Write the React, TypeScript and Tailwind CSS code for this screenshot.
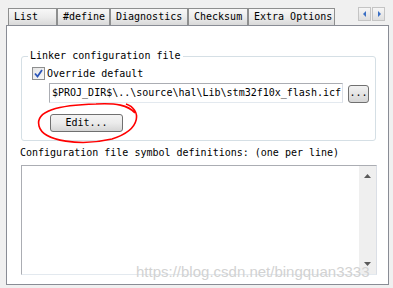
import React from 'react'

const mono = { fontFamily: '"DejaVu Sans Mono", "Liberation Mono", monospace' }

const tabs = [
  { label: 'List', w: 'w-[49px]' },
  { label: '#define', w: 'w-[53px]' },
  { label: 'Diagnostics', w: 'w-[78px]' },
  { label: 'Checksum', w: 'w-[60px]' },
  { label: 'Extra Options', w: 'w-[87px]' },
]

function Arrow({ dir }: { dir: 'left' | 'right' }) {
  return (
    <div className="w-[13px] h-[14px] border border-[#c4c4c4] bg-gradient-to-b from-[#f6f6f6] to-[#dedede] flex items-center justify-center">
      <svg width="4" height="6" viewBox="0 0 4 6">
        {dir === 'left' ? (
          <polygon points="3,0 3,6 0,3" fill="#3a6fc4" />
        ) : (
          <polygon points="1,0 1,6 4,3" fill="#3a6fc4" />
        )}
      </svg>
    </div>
  )
}

export default function App() {
  return (
    <div className="relative w-[393px] h-[288px] bg-[#f0f0f0] overflow-hidden text-[10px] text-black" style={mono}>
      {/* tab strip */}
      <div className="flex items-start h-[25px] pt-[8px] pl-[8px] pr-[8px]">
        {tabs.map((t) => (
          <div
            key={t.label}
            className={`${t.w} h-[17px] border border-b-0 border-[#8e8f8f] bg-gradient-to-b from-[#f8f8f8] via-[#ececec] to-[#d9d9d9] px-[5px] leading-[16px] whitespace-nowrap`}
          >
            {t.label}
          </div>
        ))}
        <div className="ml-auto flex gap-[1px] mt-[-1px]">
          <Arrow dir="left" />
          <Arrow dir="right" />
        </div>
      </div>

      {/* page */}
      <div className="ml-[6px] w-[383px] h-[260px] border border-[#898c95] bg-white pl-[14px] pr-[12px]">
        <fieldset className="mt-[24px] w-[355px] border border-[#d5dfe5] rounded-[3px] pl-[10px] pb-[8px]">
          <legend className="ml-[-4px] px-[2px] leading-[12px]">Linker configuration file</legend>
          <div className="flex items-center h-[13px] mt-[5px] gap-[2px]">
            <div className="w-[13px] h-[13px] border border-[#8e8f8f] bg-gradient-to-br from-[#e4e4e4] to-[#f8f8f8] flex items-center justify-center">
              <svg width="9" height="9" viewBox="0 0 9 9">
                <path d="M1 4.5 L3.5 7.5 L8 1" fill="none" stroke="#2c55b8" strokeWidth="1.8" />
              </svg>
            </div>
            <span className="leading-[12px]">Override default</span>
          </div>
          <div className="flex items-center mt-[3px] ml-[17px] gap-[5px]">
            <div className="w-[294px] h-[20px] border border-[#abadb3] border-b-[#e3e9ef] border-r-[#dbdfe6] leading-[18px] pl-[2px] whitespace-nowrap overflow-hidden">
              $PROJ_DIR$\..\source\hal\Lib\stm32f10x_flash.icf
            </div>
            <div className="w-[21px] h-[18px] border border-[#707070] rounded-[3px] bg-gradient-to-b from-[#f2f2f2] to-[#d6d6d6] leading-[14px] text-center mt-[2px]">
              ...
            </div>
          </div>
          <div className="ml-[18px] mt-[11px] w-[73px] h-[18px] border border-[#707070] rounded-[3px] bg-gradient-to-b from-[#f4f4f4] via-[#ebebeb] to-[#d5d5d5] text-center leading-[16px]">
            Edit...
          </div>
        </fieldset>

        <div className="mt-[6px] ml-[-1px] leading-[12px] whitespace-nowrap">
          Configuration file symbol definitions: (one per line)
        </div>

        <div className="mt-[6px] w-[356px] h-[110px] border border-[#abadb3] border-b-[#e3e9ef] border-r-[#dbdfe6] flex justify-end">
          <div className="w-[17px] h-full bg-[#efefef] flex flex-col items-center justify-between py-[8px]">
            <svg width="7" height="4" viewBox="0 0 7 4">
              <polygon points="0,4 7,4 3.5,0" fill="#5a5a5a" />
            </svg>
            <svg width="7" height="4" viewBox="0 0 7 4">
              <polygon points="0,0 7,0 3.5,4" fill="#5a5a5a" />
            </svg>
          </div>
        </div>
      </div>

      {/* red hand-drawn ellipse annotation */}
      <svg className="absolute left-0 top-0 pointer-events-none" width="393" height="288">
        <path
          d="M126 104 C141 109 143 129 112 139 C82 146 43 142 39 126 C35 111 58 105 96 104 C116 103 128 105 135 113"
          fill="none"
          stroke="#ff0000"
          strokeWidth="1.6"
        />
      </svg>

      {/* watermark */}
      <div
        className="absolute left-[136px] top-[263px] text-[15px] leading-[18px] text-[#d2d2d2] whitespace-nowrap"
        style={{ fontFamily: '"Liberation Sans", Arial, sans-serif' }}
      >
        https://blog.csdn.net/bingquan3333
      </div>
    </div>
  )
}
